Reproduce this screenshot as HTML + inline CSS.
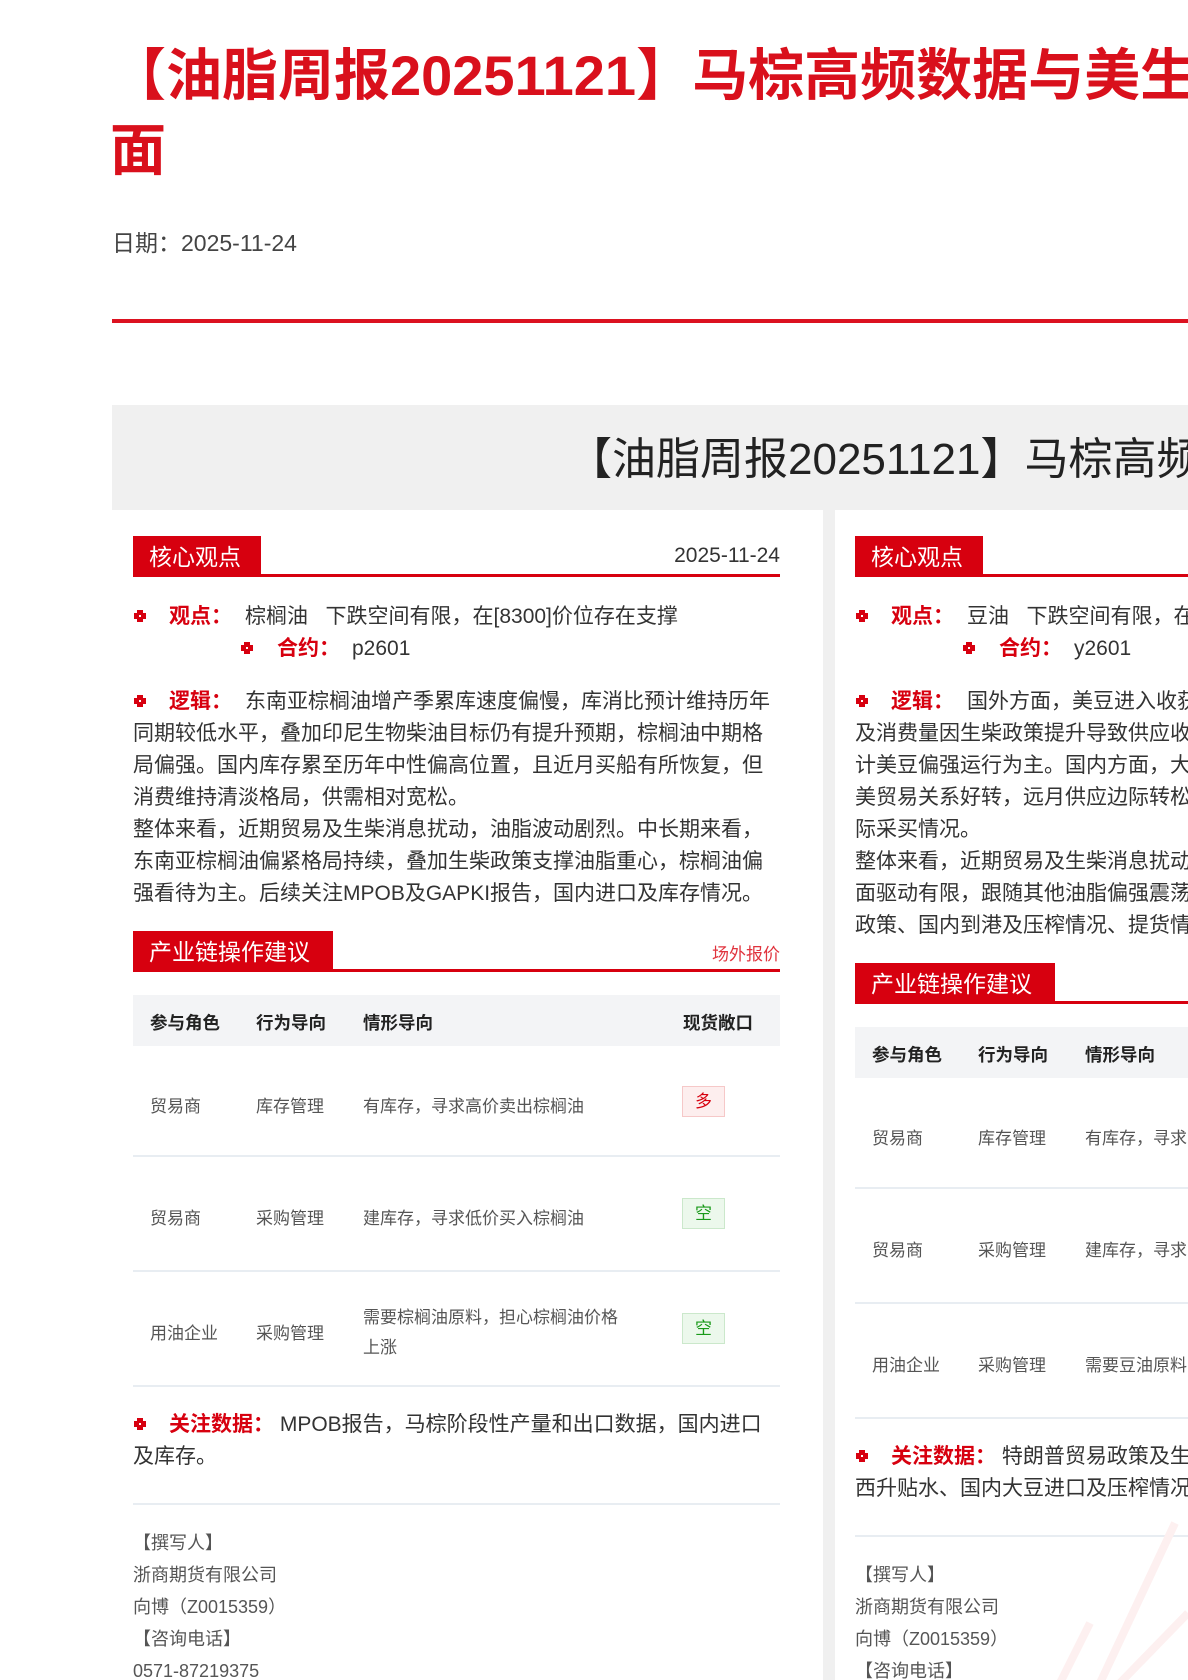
<!DOCTYPE html>
<html><head><meta charset="utf-8">
<style>
html,body{margin:0;padding:0;overflow:hidden;}
body{width:1188px;height:1680px;position:relative;background:#fff;font-family:"Liberation Sans","Noto Sans CJK SC",sans-serif;color:#333;}
#wrap{position:absolute;left:0;top:0;width:1188px;height:1680px;overflow:hidden;}
#low{position:absolute;left:0;top:3px;width:1188px;height:1677px;overflow:hidden;}
.a{position:absolute;white-space:nowrap;}
.t1{left:110px;font-size:56px;font-weight:bold;color:#d9101c;line-height:75px;}
.tag{position:absolute;background:#d7000f;color:#fff;font-size:23px;height:40px;line-height:42px;padding:0 16px;box-sizing:border-box;}
.ul{position:absolute;height:3px;background:#d7000f;width:647px;}
.p{font-size:21px;color:#333;line-height:32px;}
.lb{color:#d7000f;font-weight:bold;}
.bul{position:absolute;width:14px;height:14px;}
.th{font-size:17.5px;font-weight:bold;color:#222;}
.td{font-size:17px;color:#555;}
.hd{position:absolute;background:#f3f4f6;height:51px;width:647px;}
.dv{position:absolute;height:2px;background:#e8edf2;width:647px;}
.bd{position:absolute;width:41px;height:29px;font-size:17px;text-align:center;line-height:29px;}
.duo{background:#fdeeee;border:1px solid #f6c8c8;color:#d7000f;}
.kong{background:#ecf8ec;border:1px solid #cbe8cb;color:#1a9a1a;}
.ft{font-size:18px;color:#555;line-height:32px;}
</style></head><body>
<svg width="0" height="0" style="position:absolute"><defs>
<symbol id="b" viewBox="0 0 14 14"><path d="M4 1h6v3h3v6h-3v3H4v-3H1V4h3z" fill="#d7000f"/><rect x="6" y="6" width="2" height="2" fill="#fff"/></symbol></defs></svg>
<div id="wrap">
<div class="a t1" style="top:38px;">【油脂周报20251121】马棕高频数据与美生柴政策扰动，关注基本</div>
<div class="a t1" style="top:113px;">面</div>
<div class="a" style="left:112px;top:224px;font-size:23px;color:#444;">日期：2025-11-24</div>
<div class="a" style="left:112px;top:319px;width:1076px;height:4px;background:#dc1220;"></div>

<div id="low">
<div class="a" style="left:112px;top:402px;width:1076px;height:105px;background:#f0f0f0;"></div>
<div class="a" style="left:568px;top:429px;font-size:44px;color:#222;line-height:56px;">【油脂周报20251121】马棕高频数据与美生柴政策扰动</div>
<div class="a" style="left:823px;top:507px;width:12px;height:1170px;background:#f0f0f0;"></div>

<!-- LEFT COLUMN -->
<div class="tag" style="left:133px;top:533px;width:128px;">核心观点</div>
<div class="ul" style="left:133px;top:571px;"></div>
<div class="a" style="left:600px;top:541px;width:180px;text-align:right;font-size:21px;color:#333;">2025-11-24</div>

<svg class="bul" style="left:133px;top:606px;"><use href="#b"/></svg>
<div class="a p" style="left:169px;top:598px;"><span class="lb">观点：</span></div>
<div class="a p" style="left:245px;top:598px;">棕榈油&nbsp;&nbsp;&nbsp;下跌空间有限，在[8300]价位存在支撑</div>
<svg class="bul" style="left:240px;top:638px;"><use href="#b"/></svg>
<div class="a p" style="left:277px;top:630px;"><span class="lb">合约：</span></div>
<div class="a p" style="left:352px;top:630px;">p2601</div>

<svg class="bul" style="left:133px;top:691px;"><use href="#b"/></svg>
<div class="a p" style="left:169px;top:683px;"><span class="lb">逻辑：</span></div>
<div class="a p" style="left:245px;top:683px;">东南亚棕榈油增产季累库速度偏慢，库消比预计维持历年</div>
<div class="a p" style="left:133px;top:715px;">同期较低水平，叠加印尼生物柴油目标仍有提升预期，棕榈油中期格</div>
<div class="a p" style="left:133px;top:747px;">局偏强。国内库存累至历年中性偏高位置，且近月买船有所恢复，但</div>
<div class="a p" style="left:133px;top:779px;">消费维持清淡格局，供需相对宽松。</div>
<div class="a p" style="left:133px;top:811px;">整体来看，近期贸易及生柴消息扰动，油脂波动剧烈。中长期来看，</div>
<div class="a p" style="left:133px;top:843px;">东南亚棕榈油偏紧格局持续，叠加生柴政策支撑油脂重心，棕榈油偏</div>
<div class="a p" style="left:133px;top:875px;">强看待为主。后续关注MPOB及GAPKI报告，国内进口及库存情况。</div>

<div class="tag" style="left:133px;top:928px;width:200px;">产业链操作建议</div>
<div class="ul" style="left:133px;top:966px;"></div>
<div class="a" style="left:640px;top:937px;width:140px;text-align:right;font-size:17px;color:#e0333d;">场外报价</div>

<div class="hd" style="left:133px;top:992px;"></div>
<div class="a th" style="left:150px;top:1007px;">参与角色</div>
<div class="a th" style="left:256px;top:1007px;">行为导向</div>
<div class="a th" style="left:363px;top:1007px;">情形导向</div>
<div class="a th" style="left:683px;top:1007px;">现货敞口</div>

<div class="a td" style="left:150px;top:1089px;">贸易商</div>
<div class="a td" style="left:256px;top:1089px;">库存管理</div>
<div class="a td" style="left:363px;top:1089px;">有库存，寻求高价卖出棕榈油</div>
<div class="bd duo" style="left:682px;top:1083px;">多</div>
<div class="dv" style="left:133px;top:1152px;"></div>

<div class="a td" style="left:150px;top:1201px;">贸易商</div>
<div class="a td" style="left:256px;top:1201px;">采购管理</div>
<div class="a td" style="left:363px;top:1201px;">建库存，寻求低价买入棕榈油</div>
<div class="bd kong" style="left:682px;top:1195px;">空</div>
<div class="dv" style="left:133px;top:1267px;"></div>

<div class="a td" style="left:150px;top:1316px;">用油企业</div>
<div class="a td" style="left:256px;top:1316px;">采购管理</div>
<div class="a td" style="left:363px;top:1300px;">需要棕榈油原料，担心棕榈油价格</div>
<div class="a td" style="left:363px;top:1330px;">上涨</div>
<div class="bd kong" style="left:682px;top:1310px;">空</div>
<div class="dv" style="left:133px;top:1382px;"></div>

<svg class="bul" style="left:133px;top:1414px;"><use href="#b"/></svg>
<div class="a p" style="left:169px;top:1406px;"><span class="lb">关注数据：</span>&nbsp;MPOB报告，马棕阶段性产量和出口数据，国内进口</div>
<div class="a p" style="left:133px;top:1438px;">及库存。</div>
<div class="dv" style="left:133px;top:1500px;"></div>

<div class="a ft" style="left:133px;top:1524px;">【撰写人】</div>
<div class="a ft" style="left:133px;top:1556px;">浙商期货有限公司</div>
<div class="a ft" style="left:133px;top:1588px;">向博（Z0015359）</div>
<div class="a ft" style="left:133px;top:1620px;">【咨询电话】</div>
<div class="a ft" style="left:133px;top:1652px;">0571-87219375</div>

<!-- RIGHT COLUMN -->
<div class="tag" style="left:855px;top:533px;width:128px;">核心观点</div>
<div class="ul" style="left:855px;top:571px;width:333px;"></div>

<svg class="bul" style="left:855px;top:606px;"><use href="#b"/></svg>
<div class="a p" style="left:891px;top:598px;"><span class="lb">观点：</span></div>
<div class="a p" style="left:967px;top:598px;">豆油&nbsp;&nbsp;&nbsp;下跌空间有限，在</div>
<svg class="bul" style="left:962px;top:638px;"><use href="#b"/></svg>
<div class="a p" style="left:999px;top:630px;"><span class="lb">合约：</span></div>
<div class="a p" style="left:1074px;top:630px;">y2601</div>

<svg class="bul" style="left:855px;top:691px;"><use href="#b"/></svg>
<div class="a p" style="left:891px;top:683px;"><span class="lb">逻辑：</span></div>
<div class="a p" style="left:967px;top:683px;">国外方面，美豆进入收获</div>
<div class="a p" style="left:855px;top:715px;">及消费量因生柴政策提升导致供应收紧</div>
<div class="a p" style="left:855px;top:747px;">计美豆偏强运行为主。国内方面，大豆</div>
<div class="a p" style="left:855px;top:779px;">美贸易关系好转，远月供应边际转松，</div>
<div class="a p" style="left:855px;top:811px;">际采买情况。</div>
<div class="a p" style="left:855px;top:843px;">整体来看，近期贸易及生柴消息扰动，</div>
<div class="a p" style="left:855px;top:875px;">面驱动有限，跟随其他油脂偏强震荡为</div>
<div class="a p" style="left:855px;top:907px;">政策、国内到港及压榨情况、提货情况</div>

<div class="tag" style="left:855px;top:960px;width:200px;">产业链操作建议</div>
<div class="ul" style="left:855px;top:998px;width:333px;"></div>

<div class="hd" style="left:855px;top:1024px;width:333px;"></div>
<div class="a th" style="left:872px;top:1039px;">参与角色</div>
<div class="a th" style="left:978px;top:1039px;">行为导向</div>
<div class="a th" style="left:1085px;top:1039px;">情形导向</div>

<div class="a td" style="left:872px;top:1121px;">贸易商</div>
<div class="a td" style="left:978px;top:1121px;">库存管理</div>
<div class="a td" style="left:1085px;top:1121px;">有库存，寻求</div>
<div class="dv" style="left:855px;top:1184px;width:333px;"></div>

<div class="a td" style="left:872px;top:1233px;">贸易商</div>
<div class="a td" style="left:978px;top:1233px;">采购管理</div>
<div class="a td" style="left:1085px;top:1233px;">建库存，寻求</div>
<div class="dv" style="left:855px;top:1299px;width:333px;"></div>

<div class="a td" style="left:872px;top:1348px;">用油企业</div>
<div class="a td" style="left:978px;top:1348px;">采购管理</div>
<div class="a td" style="left:1085px;top:1348px;">需要豆油原料</div>
<div class="dv" style="left:855px;top:1414px;width:333px;"></div>

<svg class="bul" style="left:855px;top:1446px;"><use href="#b"/></svg>
<div class="a p" style="left:891px;top:1438px;"><span class="lb">关注数据：</span>&nbsp;特朗普贸易政策及生</div>
<div class="a p" style="left:855px;top:1470px;">西升贴水、国内大豆进口及压榨情况</div>
<div class="dv" style="left:855px;top:1532px;width:333px;"></div>

<div class="a ft" style="left:855px;top:1556px;">【撰写人】</div>
<div class="a ft" style="left:855px;top:1588px;">浙商期货有限公司</div>
<div class="a ft" style="left:855px;top:1620px;">向博（Z0015359）</div>
<div class="a ft" style="left:855px;top:1652px;">【咨询电话】</div>

<svg class="a" style="left:1000px;top:1500px;" width="188" height="177">
<path d="M175 20 L100 180 M188 110 L120 180 M60 180 L90 120" stroke="#fdf0f0" stroke-width="8" fill="none"/>
</svg>
</div>
</div>
</body></html>
